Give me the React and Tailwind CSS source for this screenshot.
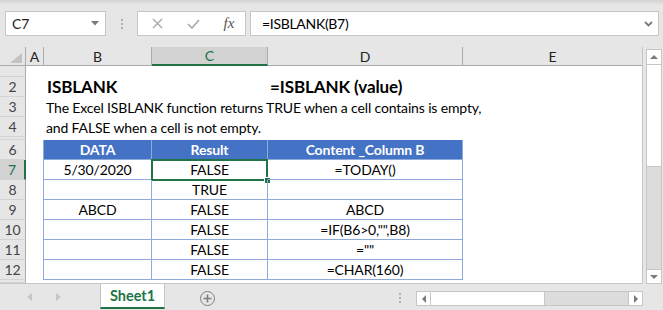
import React from "react";

const F = "font-[Lato,sans-serif]";
const BL = "border-[#8eaadb]";
const TXT = "text-[14px] tracking-[-0.15px]";

const rows = [
  { h: "h-[11px]", n: "" },
  { h: "h-[20px]", n: "2" },
  { h: "h-[20px]", n: "3" },
  { h: "h-[20px]", n: "4" },
  { h: "h-[3px]", n: "" },
  { h: "h-[20px]", n: "6" },
  { h: "h-[20px]", n: "7" },
  { h: "h-[20px]", n: "8" },
  { h: "h-[20px]", n: "9" },
  { h: "h-[20px]", n: "10" },
  { h: "h-[20px]", n: "11" },
  { h: "h-[20px]", n: "12" },
  { h: "h-[3px]", n: "" },
];

const table = {
  7: ["5/30/2020", "FALSE", "=TODAY()"],
  8: ["", "TRUE", ""],
  9: ["ABCD", "FALSE", "ABCD"],
  10: ["", "FALSE", '=IF(B6>0,"",B8)'],
  11: ["", "FALSE", '=""'],
  12: ["", "FALSE", "=CHAR(160)"],
};

function RowHeader({ n, h, sel }) {
  return (
    <div
      className={`${h} w-[26px] shrink-0 box-border flex items-center justify-center overflow-hidden text-[14px] leading-none ${
        sel
          ? "bg-[#d2d2d2] text-[#217346] border-r-2 border-r-[#217346]"
          : "bg-[#e6e6e6] text-[#444] border-r border-r-[#ababab]"
      } border-b border-b-[#d4d4d4]`}
    >
      {n}
    </div>
  );
}

function Row({ r }) {
  const n = r.n;
  const num = parseInt(n, 10);
  const isTable = num >= 6 && num <= 12;
  if (n === "2") {
    return (
      <div className={`flex ${r.h}`}>
        <RowHeader n={n} h={r.h} />
        <div className="w-[18px] shrink-0" />
        <div className="w-[224px] shrink-0 pl-[3px] flex items-center text-[17px] tracking-[-0.1px] font-bold text-black whitespace-nowrap">ISBLANK</div>
        <div className="flex-1 pl-[2px] flex items-center text-[17px] tracking-[-0.1px] font-bold text-black whitespace-nowrap">=ISBLANK (value)</div>
      </div>
    );
  }
  if (n === "3" || n === "4") {
    return (
      <div className={`flex ${r.h}`}>
        <RowHeader n={n} h={r.h} />
        <div className="w-[18px] shrink-0" />
        <div className={`flex-1 pl-[2px] flex items-center ${TXT} text-black whitespace-nowrap`}>
          {n === "3"
            ? "The Excel ISBLANK function returns TRUE when a cell contains is empty,"
            : "and FALSE when a cell is not empty."}
        </div>
      </div>
    );
  }
  if (num === 6) {
    return (
      <div className={`flex ${r.h}`}>
        <RowHeader n={n} h={r.h} />
        <div className={`w-[18px] shrink-0 box-border border-r ${BL}`} />
        {[["DATA", "w-[108px]"], ["Result", "w-[116px]"], ["Content _Column B", "w-[195px]"]].map(([t, w]) => (
          <div
            key={t}
            className={`${w} shrink-0 box-border bg-[#4472c4] border-r border-b ${BL} flex items-center justify-center text-white font-bold ${TXT} whitespace-nowrap`}
          >
            {t}
          </div>
        ))}
      </div>
    );
  }
  if (isTable) {
    const d = table[num];
    return (
      <div className={`flex ${r.h}`}>
        <RowHeader n={n} h={r.h} sel={num === 7} />
        <div className={`w-[18px] shrink-0 box-border border-r ${BL}`} />
        {[["w-[108px]", d[0]], ["w-[116px]", d[1]], ["w-[195px]", d[2]]].map(([w, t], i) => (
          <div
            key={i}
            className={`${w} shrink-0 box-border border-r border-b ${BL} flex items-center justify-center text-black ${TXT} whitespace-nowrap relative`}
          >
            {t}
            {num === 7 && i === 1 && (
              <div className="absolute left-[-1px] top-[-1px] right-[-1px] bottom-[-2px] border-2 border-[#217346]">
                <div className="absolute right-[-5px] bottom-[-5px] w-[7px] h-[7px] bg-[#217346] border border-white" />
              </div>
            )}
          </div>
        ))}
      </div>
    );
  }
  return (
    <div className={`flex ${r.h}`}>
      <RowHeader n={n} h={r.h} />
    </div>
  );
}

function ColHeader({ w, t, sel, last }) {
  return (
    <div
      className={`${w} shrink-0 box-border h-full flex items-center justify-center text-[14px] ${
        last ? "" : "border-r border-r-[#ababab]"
      } ${
        sel
          ? "bg-[#d2d2d2] text-[#217346] border-b-2 border-b-[#217346]"
          : "bg-[#e6e6e6] text-[#222] border-b border-b-[#ababab]"
      }`}
    >
      {t}
    </div>
  );
}

export default function App() {
  return (
    <div className={`w-[663px] h-[310px] bg-[#e6e6e6] flex flex-col overflow-hidden ${F}`}>
      {/* Formula bar */}
      <div className="h-[47px] shrink-0 flex items-start pt-[11px] pl-[5px] bg-[linear-gradient(#d2d2d2,#e6e6e6_5px)]">
        <div className="w-[101px] h-[25px] box-border bg-white border border-[#c6c6c6] flex items-center justify-between pl-[6px] pr-[6px]">
          <span className="text-[14px] text-[#222]">C7</span>
          <svg width="8" height="5" viewBox="0 0 8 5"><polygon points="0,0 8,0 4,4.5" fill="#7a7a7a" /></svg>
        </div>
        <div className="w-[31px] h-[25px] flex flex-col items-center justify-center gap-[2px]">
          <span className="w-[2px] h-[2px] bg-[#b0b0b0]" />
          <span className="w-[2px] h-[2px] bg-[#b0b0b0]" />
          <span className="w-[2px] h-[2px] bg-[#b0b0b0]" />
        </div>
        <div className="w-[109px] h-[25px] box-border bg-white border border-[#c6c6c6] flex items-center pl-[10px] gap-[18px]">
          <div className="w-[18px] flex justify-center">
            <svg width="11" height="11" viewBox="0 0 11 11"><path d="M1 1 L10 10 M10 1 L1 10" stroke="#a8a8a8" strokeWidth="1.4" /></svg>
          </div>
          <div className="w-[18px] flex justify-center">
            <svg width="13" height="10" viewBox="0 0 13 10"><path d="M1 5 L5 9 L12 1" stroke="#a8a8a8" strokeWidth="1.6" fill="none" /></svg>
          </div>
          <div className="w-[18px] flex justify-center">
            <span className="font-['Liberation_Serif',serif] italic text-[15px] text-[#555] leading-none">fx</span>
          </div>
        </div>
        <div className="ml-[4px] w-[409px] h-[25px] box-border bg-white border border-[#c6c6c6] flex items-center justify-between pl-[11px] pr-[5px]">
          <span className="text-[14px] tracking-[-0.3px] text-black">=ISBLANK(B7)</span>
          <svg width="9" height="6" viewBox="0 0 9 6"><path d="M1 1 L4.5 4.5 L8 1" stroke="#7a7a7a" strokeWidth="1.8" fill="none" /></svg>
        </div>
      </div>

      {/* Sheet area */}
      <div className="flex h-[237px] shrink-0">
        <div className="w-[643px] h-full box-border border-r border-b border-[#c6c6c6] bg-white flex flex-col">
          <div className="h-[19px] flex shrink-0">
            <div className="w-[26px] h-full box-border bg-[#e6e6e6] border-r border-b border-[#ababab] pl-[10px] pt-[6px]">
              <svg width="12" height="10" viewBox="0 0 12 10"><polygon points="12,0 12,10 0,10" fill="#c2c2c2" /></svg>
            </div>
            <ColHeader w="w-[18px]" t="A" />
            <ColHeader w="w-[108px]" t="B" />
            <ColHeader w="w-[116px]" t="C" sel />
            <ColHeader w="w-[195px]" t="D" />
            <ColHeader w="w-[179px]" t="E" last />
          </div>
          {rows.map((r, i) => (
            <Row key={i} r={r} />
          ))}
        </div>
        <div className="w-[20px] pl-[3px] pt-[2px]">
          <div className="w-[16px] h-[235px] box-border border border-[#c6c6c6] bg-[#dcdcdc] flex flex-col">
            <div className="h-[15px] bg-white border-b border-[#c6c6c6] flex items-center justify-center shrink-0">
              <svg width="8" height="4" viewBox="0 0 8 4"><polygon points="0,4 8,4 4,0" fill="#7a7a7a" /></svg>
            </div>
            <div className="h-[102px] bg-white border-b border-[#c6c6c6] shrink-0" />
            <div className="flex-1" />
            <div className="h-[14px] bg-white border-t border-[#c6c6c6] flex items-center justify-center shrink-0">
              <svg width="8" height="4" viewBox="0 0 8 4"><polygon points="0,0 8,0 4,4" fill="#7a7a7a" /></svg>
            </div>
          </div>
        </div>
      </div>

      {/* Sheet tabs bar */}
      <div className="h-[26px] flex items-start">
        <div className="w-[100px] h-full flex items-center pl-[27px] gap-[24px]">
          <svg width="5" height="8" viewBox="0 0 5 8"><polygon points="5,0 5,8 0,4" fill="#c4c4c4" /></svg>
          <svg width="5" height="8" viewBox="0 0 5 8"><polygon points="0,0 0,8 5,4" fill="#c4c4c4" /></svg>
        </div>
        <div className="w-[65px] h-[25px] box-border bg-white border-l border-r border-[#c6c6c6] border-b-2 border-b-[#217346] flex items-center justify-center text-[14.5px] font-bold text-[#217346]">
          Sheet1
        </div>
        <div className="ml-[35px] mt-[7px] w-[15px] h-[15px] box-border rounded-full border-[1.5px] border-[#7f7f7f] flex items-center justify-center">
          <svg width="9" height="9" viewBox="0 0 9 9"><path d="M4.5 0.5 V8.5 M0.5 4.5 H8.5" stroke="#7f7f7f" strokeWidth="1.6" /></svg>
        </div>
        <div className="ml-[184px] mt-[9px] flex flex-col gap-[2px]">
          <span className="w-[2px] h-[2px] bg-[#b0b0b0]" />
          <span className="w-[2px] h-[2px] bg-[#b0b0b0]" />
          <span className="w-[2px] h-[2px] bg-[#b0b0b0]" />
        </div>
        <div className="ml-[15px] mt-[7px] w-[227px] h-[15px] box-border border border-[#c6c6c6] bg-[#dcdcdc] flex">
          <div className="w-[14px] h-full bg-white border-r border-[#c6c6c6] flex items-center justify-center shrink-0">
            <svg width="4" height="8" viewBox="0 0 4 8"><polygon points="4,0 4,8 0,4" fill="#7a7a7a" /></svg>
          </div>
          <div className="w-[114px] h-full bg-white border-r border-[#c6c6c6] shrink-0" />
          <div className="flex-1" />
          <div className="w-[14px] h-full bg-white border-l border-[#c6c6c6] flex items-center justify-center shrink-0">
            <svg width="4" height="8" viewBox="0 0 4 8"><polygon points="0,0 0,8 4,4" fill="#7a7a7a" /></svg>
          </div>
        </div>
      </div>
    </div>
  );
}
